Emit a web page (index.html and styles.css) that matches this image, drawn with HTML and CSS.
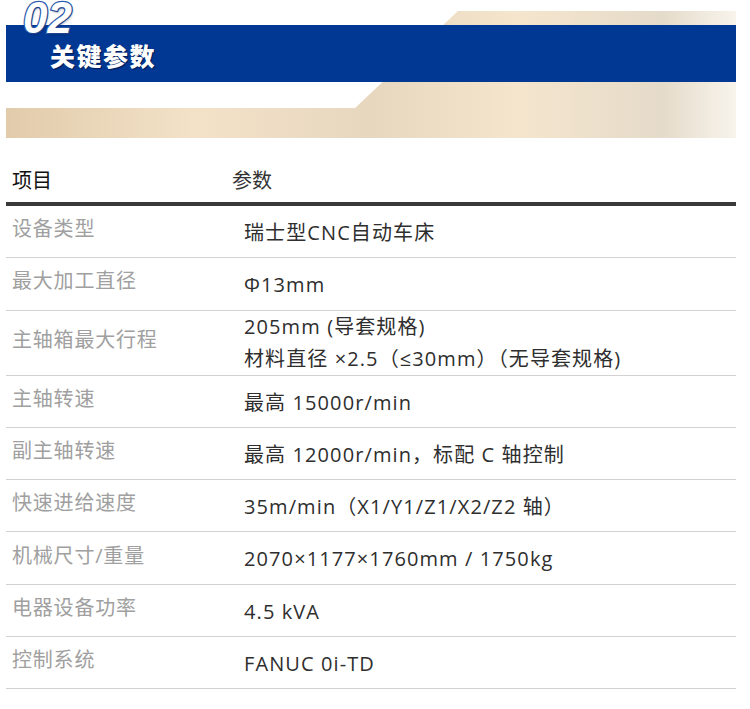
FILE: index.html
```html
<!DOCTYPE html>
<html lang="zh-CN">
<head>
<meta charset="utf-8">
<title>关键参数</title>
<link rel="stylesheet" href="styles.css">
</head>
<body>
<div class="wrap">
  <div class="banner">
    <div class="beige"></div>
    <div class="bar">
      <h2 class="title">关键参数</h2>
    </div>
    <span class="num">02</span>
  </div>
  <table class="spec">
    <thead>
      <tr><th class="h1">项目</th><th class="h2">参数</th></tr>
    </thead>
    <tbody>
      <tr><td class="lab">设备类型</td><td class="val">瑞士型CNC自动车床</td></tr>
      <tr><td class="lab">最大加工直径</td><td class="val">Φ13mm</td></tr>
      <tr><td class="lab">主轴箱最大行程</td><td class="val multi">205mm (导套规格)<br>材料直径 ×2.5（≤30mm）（无导套规格)</td></tr>
      <tr><td class="lab">主轴转速</td><td class="val">最高 15000r/min</td></tr>
      <tr><td class="lab">副主轴转速</td><td class="val">最高 12000r/min，标配 C 轴控制</td></tr>
      <tr><td class="lab">快速进给速度</td><td class="val">35m/min（X1/Y1/Z1/X2/Z2 轴）</td></tr>
      <tr><td class="lab">机械尺寸/重量</td><td class="val">2070×1177×1760mm / 1750kg</td></tr>
      <tr><td class="lab">电器设备功率</td><td class="val">4.5 kVA</td></tr>
      <tr><td class="lab">控制系统</td><td class="val">FANUC 0i-TD</td></tr>
    </tbody>
  </table>
</div>
</body>
</html>
```

FILE: styles.css
```css
html, body {
  margin: 0;
  padding: 0;
  background: #fff;
}
body {
  font-family: "Open Sans", "Noto Sans CJK SC", sans-serif;
  color: #333;
}
.wrap {
  width: 730px;
  margin-left: 6px;
}
.banner {
  position: relative;
  height: 138px;
}
.beige {
  position: absolute;
  left: 0;
  top: 0;
  width: 730px;
  height: 138px;
  background: linear-gradient(90deg, #e1cbab 0%, #f3e2c8 26%, #e7d7bf 50%, #f5e5cd 70%, #e5dbca 90%, #f8f4ec 100%);
  clip-path: polygon(452px 11px, 730px 11px, 730px 138px, 0 138px, 0 108px, 349px 108px);
}
.bar {
  position: relative;
  top: 25px;
  height: 57px;
  background: #013893;
  display: flex;
  align-items: center;
  padding-left: 44px;
  box-sizing: border-box;
}
.title {
  margin: 0;
  font-family: "Noto Sans CJK SC", sans-serif;
  font-weight: 900;
  font-size: 25px;
  letter-spacing: 1.5px;
  line-height: 30px;
  color: #fff;
  padding-top: 2px;
  text-shadow: 1px 1px 1px rgba(0, 0, 40, 0.55);
}
.num {
  position: absolute;
  left: 17px;
  top: 0;
  font-family: "Liberation Sans", sans-serif;
  font-weight: bold;
  font-style: italic;
  font-size: 44px;
  line-height: 36px;
  color: #fff;
  -webkit-text-stroke: 2.5px #2c5aab;
  paint-order: stroke fill;
  text-shadow: 1px 2px 2px rgba(0, 20, 80, 0.35);
}
.spec {
  width: 730px;
  border-collapse: collapse;
  font-size: 20px;
}
.spec th {
  text-align: left;
  font-weight: normal;
  line-height: 30px;
  padding: 28px 0 6px 0;
  border-bottom: 4px solid #3a3a3a;
}
.spec .h1 {
  width: 220px;
  padding-left: 6px;
  color: #111;
}
.spec .h2 {
  color: #333;
}
.spec td {
  border-bottom: 1px solid #d2d2d2;
}
.lab {
  color: #a0a0a0;
  vertical-align: middle;
  line-height: 30px;
  padding: 0 0 5px 6px;
  letter-spacing: 0.8px;
}
.val {
  color: #2e2e2e;
  vertical-align: top;
  line-height: 32.3px;
  padding: 11px 0 8px 12px;
  letter-spacing: 1.1px;
}
.val.multi {
  line-height: 32px;
  padding: 0 0 0 12px;
}
```
